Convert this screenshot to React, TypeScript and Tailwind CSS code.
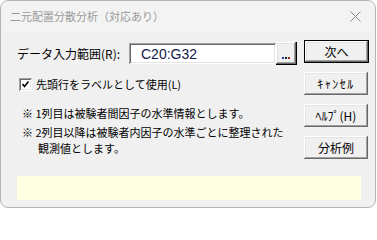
import React from 'react';

const jp = { fontFamily: '"Noto Sans CJK JP", "Noto Sans", sans-serif' };

function WinButton({ label, isDefault = false, wide = false }: { label: string; isDefault?: boolean; wide?: boolean }) {
  const bevel =
    'shadow-[inset_-1px_-1px_#696969,inset_1px_1px_#ffffff,inset_-2px_-2px_#a0a0a0,inset_2px_2px_#e3e3e3]';
  const text = wide ? 'text-[12px] tracking-[1.5px]' : 'text-[12px]';
  if (isDefault) {
    return (
      <div className="w-[65px] h-[23px] border border-black">
        <div className={`w-full h-full bg-[#f0f0f0] flex items-center justify-center text-black ${text} ${bevel}`}>
          {label}
        </div>
      </div>
    );
  }
  return (
    <div className={`w-[64px] h-[23px] bg-[#f0f0f0] flex items-center justify-center text-black ${text} ${bevel}`}>
      {label}
    </div>
  );
}

export default function App() {
  return (
    <div className="w-[377px] h-[209px] bg-white" style={jp}>
      <div className="w-[376px] h-[208px] rounded-[8px] border border-[#b4b4b4] bg-[#f0f0f0] overflow-hidden flex flex-col">
        {/* title bar */}
        <div className="h-[31px] shrink-0 flex items-center justify-between pl-[9px] pr-[12px] bg-[#f3f3f3]">
          <span className="text-[11px] text-[#999999] leading-none">二元配置分散分析（対応あり）</span>
          <svg width="11" height="11" viewBox="0 0 11 11" className="mr-[2px]">
            <path d="M0.5 0.5 L10.5 10.5 M10.5 0.5 L0.5 10.5" stroke="#8a8a8a" strokeWidth="1" />
          </svg>
        </div>

        {/* body */}
        <div className="flex pt-[7px]">
          <div className="flex-1 pl-[16px] pt-[3px]">
            <div className="flex items-center h-[23px]">
              <span className="text-[12px] text-black w-[112px]">データ入力範囲(R):</span>
              <div className="w-[147px] h-[21px] bg-white flex items-center pl-[12px] shadow-[inset_1px_1px_#a0a0a0,inset_-1px_-1px_#ffffff,inset_2px_2px_#696969,inset_-2px_-2px_#e3e3e3]">
                <span className="text-[14px] text-[#14184a] leading-none" style={{ fontFamily: '"Liberation Sans", Arial, sans-serif' }}>
                  C20:G32
                </span>
              </div>
              <div className="w-[21px] h-[23px] border-r border-b border-black">
                <div className="w-full h-full bg-[#f0f0f0] flex items-end justify-center pb-[5px] shadow-[inset_-1px_-1px_#696969,inset_1px_1px_#ffffff,inset_-2px_-2px_#a0a0a0,inset_2px_2px_#e3e3e3]">
                  <span className="flex gap-[1px]">
                    <span className="w-[2px] h-[2px] bg-[#1f3fa0]" />
                    <span className="w-[2px] h-[2px] bg-[#202020]" />
                    <span className="w-[2px] h-[2px] bg-[#a03020]" />
                  </span>
                </div>
              </div>
            </div>

            <div className="flex items-center mt-[11px] h-[16px] pl-[2px]">
              <div className="w-[13px] h-[13px] bg-white shadow-[inset_1px_1px_#a0a0a0,inset_-1px_-1px_#ffffff,inset_2px_2px_#696969,inset_-2px_-2px_#e3e3e3] flex items-center justify-center">
                <svg width="9" height="9" viewBox="0 0 9 9">
                  <path d="M1.5 4 L3.5 6.5 L7.5 1.5" stroke="#000" strokeWidth="1.6" fill="none" />
                </svg>
              </div>
              <span className="ml-[4px] text-[11px] text-black leading-[16px]">先頭行をラベルとして使用(L)</span>
            </div>

            <div className="mt-[13px] pl-[5px] text-[11px] text-black leading-[16px]">
              ※ 1列目は被験者間因子の水準情報とします。
            </div>
            <div className="mt-[3px] pl-[5px] text-[11px] text-black leading-[16px]">
              ※ 2列目以降は被験者内因子の水準ごとに整理された
            </div>
            <div className="pl-[21px] text-[11px] text-black leading-[16px]">観測値とします。</div>
          </div>

          <div className="w-[71px] flex flex-col items-start gap-[9px] pt-[1px]">
            <WinButton label="次へ" isDefault />
            <WinButton label="ｷｬﾝｾﾙ" wide />
            <WinButton label="ﾍﾙﾌﾟ(H)" />
            <WinButton label="分析例" />
          </div>
        </div>

        <div className="mt-[17px] ml-[16px] w-[344px] h-[24px] bg-[#ffffe1]" />
      </div>
    </div>
  );
}
